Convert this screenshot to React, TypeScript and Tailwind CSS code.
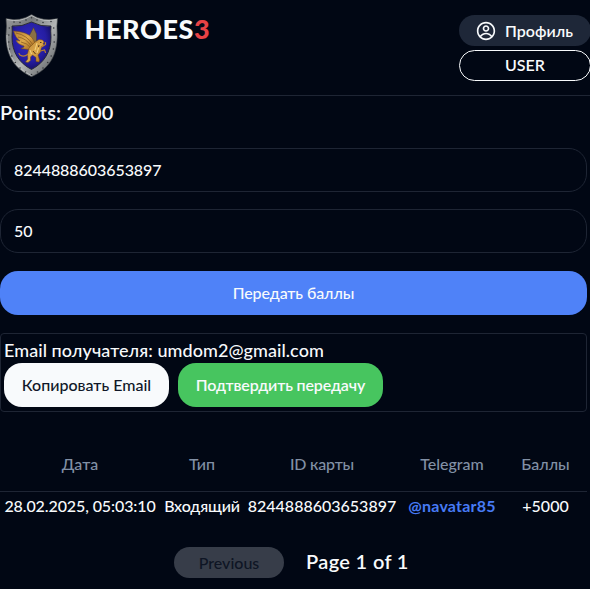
import { CgProfile } from 'react-icons/cg';

const rivets: [number, number][] = [
  [9, 8], [15, 8.5], [21, 6], [26.5, 3.8], [32, 6], [38, 8.5], [46, 7.5],
  [4.3, 14], [3.8, 21], [3.8, 28], [4.6, 35], [6.8, 42], [10.3, 48.5], [15, 54], [20.5, 58],
  [26.5, 60.5], [32.5, 58], [38, 54], [42.7, 48.5], [46.2, 42], [48.4, 35], [49.2, 28], [49.2, 21], [48.7, 14],
];

function ShieldLogo() {
  return (
    <svg width="53" height="63" viewBox="0 0 53 63" className="block" aria-hidden="true">
      <defs>
        <linearGradient id="rim" x1="0" y1="0" x2="1" y2="1">
          <stop offset="0" stopColor="#9a9c9d" />
          <stop offset="0.3" stopColor="#777a7c" />
          <stop offset="0.55" stopColor="#b4b6b7" />
          <stop offset="0.8" stopColor="#7b7e80" />
          <stop offset="1" stopColor="#4c4f52" />
        </linearGradient>
        <radialGradient id="field" cx="0.45" cy="0.4" r="0.65">
          <stop offset="0" stopColor="#332bc0" />
          <stop offset="0.65" stopColor="#251da2" />
          <stop offset="1" stopColor="#130e5c" />
        </radialGradient>
        <linearGradient id="gold" x1="0" y1="0" x2="1" y2="1">
          <stop offset="0" stopColor="#b07c35" />
          <stop offset="0.5" stopColor="#dda84a" />
          <stop offset="1" stopColor="#9c611c" />
        </linearGradient>
      </defs>
      <path d="M1 4.5Q15 8 26.5 0.5Q38 8 52.5 4.5Q51.5 12 52.2 20C52.5 42 44 55 26.5 62.7C10 55 .5 42 1 20Q2 12 1 4.5Z" fill="url(#rim)" stroke="#45484b" strokeWidth=".6" />
      <path d="M2 5.5Q15 9 26.5 1.5Q38 9 51.5 5.5" fill="none" stroke="#c4c6c7" strokeWidth=".8" />
      <path d="M2 21C1.5 41 11 54 26.5 61.5" fill="none" stroke="#c0c2c4" strokeWidth=".9" />
      <path d="M7 12Q17 13 26.5 8Q36 13 46 12Q45.5 17 46 23C46 38 39 49 26.5 55.5C14 49 7 38 7 23Q7.5 17 7 12Z" fill="url(#field)" stroke="#24252e" strokeWidth=".9" />
      {rivets.map(([x, y]) => (
        <circle key={`${x}-${y}`} cx={x} cy={y} r=".8" fill="#34373b" />
      ))}
      <path d="M24 22L26 18.5L28.5 13.5L31.5 20L31.5 29L26 29Z" fill="#8a7043" stroke="#4e3c22" strokeWidth=".5" />
      <path d="M8.5 17Q18 17.5 23 20.5Q28 23 30 29L29 34L23 35.5L16 34.5Q20 33 19 32Q12 30 11 26L15 27Q10 23 8.5 17Z" fill="url(#gold)" stroke="#6f4514" strokeWidth=".5" />
      <path d="M11 19Q22 21 28 31M13 23Q21 24 27 33M16 28Q22 29 26 34" fill="none" stroke="#80551f" strokeWidth=".7" />
      <path d="M30 28L34 25.5L37.5 26L39.5 28.5L38 29L39 31.5L36.5 32.5L35.5 38L33 41L34.5 46L34 48L31 47.5L31 43.5L27.5 41L25.5 43L25.5 46.5L23 48.5L20.5 48L22.8 45L22.5 40L24 34Z" fill="url(#gold)" stroke="#75490f" strokeWidth=".5" />
      <path d="M22.5 40.5Q19 43.5 15 41L14 39.5M36.5 33L40.5 30.5L40.5 28.5M35.5 37L39.5 36L40.5 38.5" fill="none" stroke="#b8802f" strokeWidth="1.2" strokeLinecap="round" />
      <path d="M32 29L30 36M33.5 34L32 39M25 36L26.5 40" fill="none" stroke="#f6d987" strokeWidth=".9" />
      <path d="M35 28.5H36.5M28 37L30.5 40M34 31L33.5 33" stroke="#4a2c12" strokeWidth=".9" />
    </svg>
  );
}

function Header() {
  return (
    <header className="flex h-24 items-start justify-between border-b border-[#1e2534]">
      <div className="flex items-start">
        <div className="pl-[5px] pt-3.5">
          <ShieldLogo />
        </div>
        <h1 className="ml-[26.5px] pt-[11px] text-[27px] font-black leading-9 tracking-[0.6px]">
          HEROES<span className="text-[#e74245]">3</span>
        </h1>
      </div>
      <div className="-mr-px flex w-[132px] shrink-0 flex-col gap-1 pt-[15px]">
        <button className="flex h-[31px] items-center rounded-full bg-[#1e2738] pl-[17px] font-semibold">
          <CgProfile className="mr-[9px] size-5" />
          Профиль
        </button>
        <button className="flex h-[31px] items-center justify-center rounded-full border border-[#f8fafc] pb-px font-semibold">
          USER
        </button>
      </div>
    </header>
  );
}

function TransferForm() {
  return (
    <section className="w-[587px]">
      <h2 className="h-[52px] pt-0.5 text-xl font-semibold leading-7 tracking-[0.15px]">Points: 2000</h2>
      <div className="flex h-11 items-center rounded-[18px] border border-[#1e2534] px-[13px] pb-px tracking-[-0.06px]">
        8244888603653897
      </div>
      <div className="mt-[17px] flex h-11 items-center rounded-[18px] border border-[#1e2534] px-[13px]">50</div>
      <button className="mt-[18px] flex h-11 w-full items-center justify-center rounded-[18px] bg-[#4f82f8] tracking-[-0.1px]">
        Передать баллы
      </button>
      <div className="mt-[18px] h-[79px] rounded-[4px] border border-[#1e2534] px-[3px] pt-[3px]">
        <p className="h-[26px] text-lg leading-[26px] tracking-[0.06px]">Email получателя: umdom2@gmail.com</p>
        <div className="flex gap-[9px]">
          <button className="h-11 w-[165px] rounded-[18px] bg-[#f8fafc] pb-px text-[#101728]">Копировать Email</button>
          <button className="h-11 w-[205px] rounded-[18px] bg-[#47c55f] pb-px font-semibold tracking-[-0.16px]">
            Подтвердить передачу
          </button>
        </div>
      </div>
    </section>
  );
}

function History() {
  return (
    <section className="mt-7 w-[587px]">
      <div className="grid h-[52px] grid-cols-[160px_84px_156px_104px_83px] items-center border-b border-[#1e2534] pb-[3px] text-center text-[#8290a5]">
        <span>Дата</span>
        <span>Тип</span>
        <span className="tracking-[-0.2px]">ID карты</span>
        <span>Telegram</span>
        <span>Баллы</span>
      </div>
      <div className="grid h-7 grid-cols-[160px_84px_156px_104px_83px] items-center whitespace-nowrap pb-px text-center">
        <span className="tracking-[-0.1px]">28.02.2025, 05:03:10</span>
        <span className="tracking-[-0.15px]">Входящий</span>
        <span>8244888603653897</span>
        <span className="font-bold tracking-[0.2px] text-[#477bf5]">@navatar85</span>
        <span>+5000</span>
      </div>
    </section>
  );
}

export default function App() {
  return (
    <div className="h-[589px] overflow-hidden bg-[#010714] font-['Lato',sans-serif] text-base font-medium text-[#f8fafc]">
      <Header />
      <TransferForm />
      <History />
      <nav className="mt-[27px] flex h-[31px] items-center gap-[22px] pl-[174px]">
        <button className="h-[31px] w-[110px] rounded-full bg-[#373d49] text-[#0e1524]">Previous</button>
        <span className="pb-1 text-xl font-semibold tracking-[0.35px]">Page 1 of 1</span>
      </nav>
    </div>
  );
}
